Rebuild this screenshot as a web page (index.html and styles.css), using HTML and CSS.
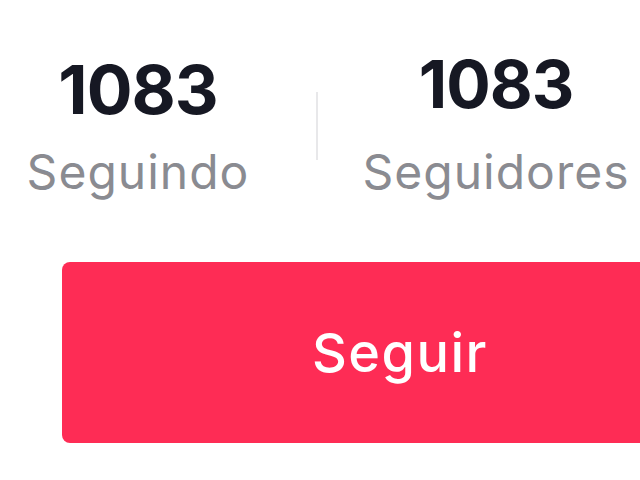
FILE: index.html
```html
<!DOCTYPE html>
<html lang="pt">
<head>
    <meta charset="UTF-8">
    <meta name="viewport" content="width=device-width, initial-scale=1.0">
    <title>Perfil</title>
    <link rel="stylesheet" href="styles.css">
</head>
<body>
    <section class="stats">
        <div class="stat stat-first">
            <strong class="count">1083</strong>
            <span class="label">Seguindo</span>
        </div>
        <span class="divider"></span>
        <div class="stat">
            <strong class="count">1083</strong>
            <span class="label">Seguidores</span>
        </div>
    </section>

    <div class="actions">
        <button class="follow">Seguir</button>
    </div>
</body>
</html>
```

FILE: styles.css
```css
body {
    margin: 0;
    background-color: #fff;
    font-family: Inter, "Noto Sans", sans-serif;
    color: #161823;
    overflow: hidden;
}

.stats {
    display: flex;
    margin-left: -40px;
    padding-top: 51px;
}

.stat {
    width: 356px;
    flex-shrink: 0;
    display: flex;
    flex-direction: column;
    align-items: center;
}

.count {
    font-size: 66px;
    line-height: 1;
    font-weight: 700;
    letter-spacing: -1px;
}

.stat-first .count {
    font-size: 68px;
    margin-top: 4px;
    margin-bottom: -6px;
}

.label {
    margin-top: 31px;
    font-size: 48px;
    line-height: 1;
    letter-spacing: 1px;
    color: #8a8b91;
}

.divider {
    width: 2px;
    height: 68px;
    margin-top: 41px;
    background-color: #e8e8ea;
    flex-shrink: 0;
}

.actions {
    padding-top: 66px;
    padding-left: 62px;
}

.follow {
    width: 676px;
    height: 181px;
    border: none;
    border-radius: 8px;
    background-color: #fe2c55;
    color: #fff;
    font-family: Inter, "Noto Sans", sans-serif;
    font-size: 54px;
    font-weight: 500;
    letter-spacing: 1.5px;
    cursor: pointer;
}

.follow:hover {
    background-color: #ef2950;
}
```
